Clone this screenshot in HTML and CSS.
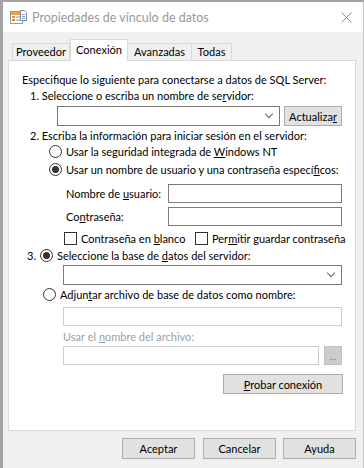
FILE: index.html
```html
<!DOCTYPE html>
<html lang="es">
<head>
  <meta charset="UTF-8" />
  <title>Propiedades de vínculo de datos</title>
  <link rel="stylesheet" href="styles.css">
</head>
<body>

  <div class="window">
    <div class="titlebar">
      <svg class="app-icon" width="17" height="14" viewBox="0 0 17 14">
        <rect x="0.5" y="1.5" width="12" height="12" fill="#fff" stroke="#9a9a9a"/>
        <rect x="1" y="2" width="11" height="3" fill="#f0a04a"/>
        <rect x="2" y="6" width="3" height="2" fill="#e08a3a"/>
        <rect x="6" y="6" width="5" height="2" fill="#c8c8c8"/>
        <rect x="2" y="9" width="3" height="2" fill="#e08a3a"/>
        <rect x="6" y="9" width="5" height="2" fill="#c8c8c8"/>
        <path d="M10.5 0.5 h4 l2 2 v8 h-6 z" fill="#fff" stroke="#8a8a8a"/>
        <path d="M12 4.5 h3 M12 6.5 h3 M12 8.5 h3" stroke="#7aa0c8"/>
      </svg>
      <span class="title">Propiedades de vínculo de datos</span>
      <svg class="close" width="11" height="11" viewBox="0 0 11 11">
        <path d="M0.5 0.5 L10.5 10.5 M10.5 0.5 L0.5 10.5" stroke="#8a8a8a" stroke-width="1"/>
      </svg>
    </div>

    <div class="content">
      <div class="tabs">
        <div class="tab first">Proveedor</div>
        <div class="tab active">Conexión</div>
        <div class="tab">Avanzadas</div>
        <div class="tab last">Todas</div>
      </div>

      <div class="panel">
        <div class="row intro"><span>Especifique lo siguiente para conectarse a datos de SQL Server:</span></div>
        <div class="row step"><span>1. Seleccione o escriba un nombre de se<u>r</u>vidor:</span></div>
        <div class="row server">
          <div class="combo server-combo"><span class="chevron"></span></div>
          <button class="btn refresh">Actualiza<u>r</u></button>
        </div>

        <div class="row step step2"><span>2. Escriba la información para iniciar sesión en el servidor:</span></div>
        <div class="row option opt1"><span class="radio"></span><span>Usar la seguridad integrada de <u>W</u>indows NT</span></div>
        <div class="row option opt2"><span class="radio checked"></span><span>Usar un nombre de usuario y una contraseña especí<u>f</u>icos:</span></div>
        <div class="row field user">
          <label>Nombre de <u>u</u>suario:</label>
          <div class="input"></div>
        </div>
        <div class="row field pass">
          <label>Co<u>n</u>traseña:</label>
          <div class="input"></div>
        </div>
        <div class="row checks">
          <span class="check-item blank"><span class="checkbox"></span><span>Contraseña en <u>b</u>lanco</span></span>
          <span class="check-item"><span class="checkbox"></span><span>Per<u>m</u>itir guardar contraseña</span></span>
        </div>

        <div class="row step3"><span class="num">3.</span><span class="radio checked"></span><span>Seleccione la base de <u>d</u>atos del servidor:</span></div>
        <div class="row db">
          <div class="combo db-combo"><span class="chevron"></span></div>
        </div>
        <div class="row attach"><span class="radio"></span><span>Adjun<u>t</u>ar archivo de base de datos como nombre:</span></div>
        <div class="row db">
          <div class="input disabled wide"></div>
        </div>
        <div class="row file-label"><span>Usar el <u>n</u>ombre del archivo:</span></div>
        <div class="row file">
          <div class="input disabled file-input"></div>
          <button class="btn dots">...</button>
        </div>
        <div class="row test">
          <button class="btn probe"><u>P</u>robar conexión</button>
        </div>
      </div>

      <div class="actions">
        <button class="btn action ok">Aceptar</button>
        <button class="btn action cancel">Cancelar</button>
        <button class="btn action">Ayuda</button>
      </div>
    </div>
  </div>

</body>
</html>
```

FILE: styles.css
```css
body {
  margin: 0;
  background: #a4a4a4;
  font-family: Lato, "Liberation Sans", sans-serif;
  font-size: 11px;
  color: #000;
  overflow: hidden;
}
.window {
  margin: 2px 0 0 3px;
  width: 360px;
  height: 466px;
  background: #f0f0f0;
  border-right: 1px solid #c4c4c4;
}
.titlebar {
  height: 30px;
  background: #fff;
  display: flex;
  align-items: center;
}
.app-icon { margin: 0 5px 0 7px; }
.title {
  flex: 1;
  font-size: 12.5px;
  color: #9a9a9a;
}
.close { margin-right: 11px; }

.content { padding-left: 5px; }

/* tabs */
.tabs {
  display: flex;
  align-items: flex-end;
  height: 21px;
  margin: 7px 0 0 4px;
}
.tab {
  box-sizing: border-box;
  height: 17px;
  line-height: 16px;
  border: 1px solid #d9d9d9;
  border-bottom: none;
  background: #f0f0f0;
  text-align: center;
}
.tab.first { width: 58px; }
.tab.active {
  width: 58px;
  height: 22px;
  line-height: 19px;
  background: #fff;
  position: relative;
  margin-bottom: -1px;
  z-index: 1;
}
.tab:nth-child(3) { width: 64px; border-left: none; }
.tab.last { width: 40px; border-left: none; }

/* panel */
.panel {
  width: 348px;
  height: 371px;
  box-sizing: border-box;
  background: #fff;
  border: 1px solid #d9d9d9;
  padding-top: 10px;
}
.row {
  display: flex;
  align-items: center;
  white-space: nowrap;
}
.intro { height: 16px; padding-left: 13px; }
.step { height: 16px; padding-left: 21px; }
.server { margin-top: 3px; height: 20px; padding-left: 48px; }
.step2 { margin-top: 1px; }
.option { padding-left: 40px; }
.opt1 { height: 17px; }
.opt2 { height: 18px; }
.field { padding-left: 57px; }
.user { margin-top: 6px; height: 19px; }
.pass { margin-top: 4px; height: 19px; }
.field label { width: 102px; flex-shrink: 0; }
.checks { height: 16px; padding-left: 55px; margin-top: 4px; }
.check-item { display: flex; align-items: center; }
.check-item.blank { width: 131px; }
.step3 { height: 18px; padding-left: 18px; }
.step3 .num { margin-right: 4px; }
.db { margin-top: 1px; padding-left: 54px; height: 20px; }
.attach { height: 18px; padding-left: 34px; }
.row.db + .attach + .db { margin-top: 4px; height: 19px; }
.file-label { height: 16px; padding-left: 54px; margin-top: 2px; color: #a0a0a0; }
.file { margin-top: 2px; height: 19px; padding-left: 54px; }
.test { margin-top: 9px; padding-left: 214px; }

/* controls */
.radio {
  flex-shrink: 0;
  width: 13px;
  height: 13px;
  box-sizing: border-box;
  border: 1px solid #333;
  border-radius: 50%;
  margin-right: 4px;
  background: #fff;
  position: relative;
}
.radio.checked::after {
  content: "";
  position: absolute;
  left: 2px;
  top: 2px;
  width: 7px;
  height: 7px;
  border-radius: 50%;
  background: #333;
}
.checkbox {
  flex-shrink: 0;
  width: 13px;
  height: 13px;
  box-sizing: border-box;
  border: 1px solid #333;
  background: #fff;
  margin-right: 4px;
}
.input, .combo {
  flex-shrink: 0;
  box-sizing: border-box;
  height: 19px;
  border: 1px solid #7a7a7a;
  background: #fff;
}
.field .input { width: 174px; }
.combo {
  height: 20px;
  position: relative;
}
.server-combo { width: 223px; }
.db-combo { width: 279px; }
.chevron {
  position: absolute;
  right: 7px;
  top: 4px;
  width: 5px;
  height: 5px;
  border-right: 1px solid #666;
  border-bottom: 1px solid #666;
  transform: rotate(45deg);
}
.input.disabled { border-color: #cccccc; }
.input.wide { width: 279px; }
.file-input { width: 256px; }

.btn {
  flex-shrink: 0;
  font-family: inherit;
  font-size: 11px;
  color: #000;
  background: #e1e1e1;
  border: 1px solid #adadad;
  padding: 0;
  box-sizing: border-box;
}
.refresh { width: 58px; height: 20px; margin-left: 4px; }
.dots {
  width: 18px;
  height: 19px;
  margin-left: 5px;
  background: #cccccc;
  border-color: #bfbfbf;
  color: #838383;
  font-size: 10px;
}
.probe { width: 120px; height: 20px; }

.actions {
  display: flex;
  margin-top: 7px;
  padding-left: 114px;
}
.action { width: 73px; height: 21px; }
.ok { margin-right: 8px; }
.cancel { margin-right: 7px; }
```
